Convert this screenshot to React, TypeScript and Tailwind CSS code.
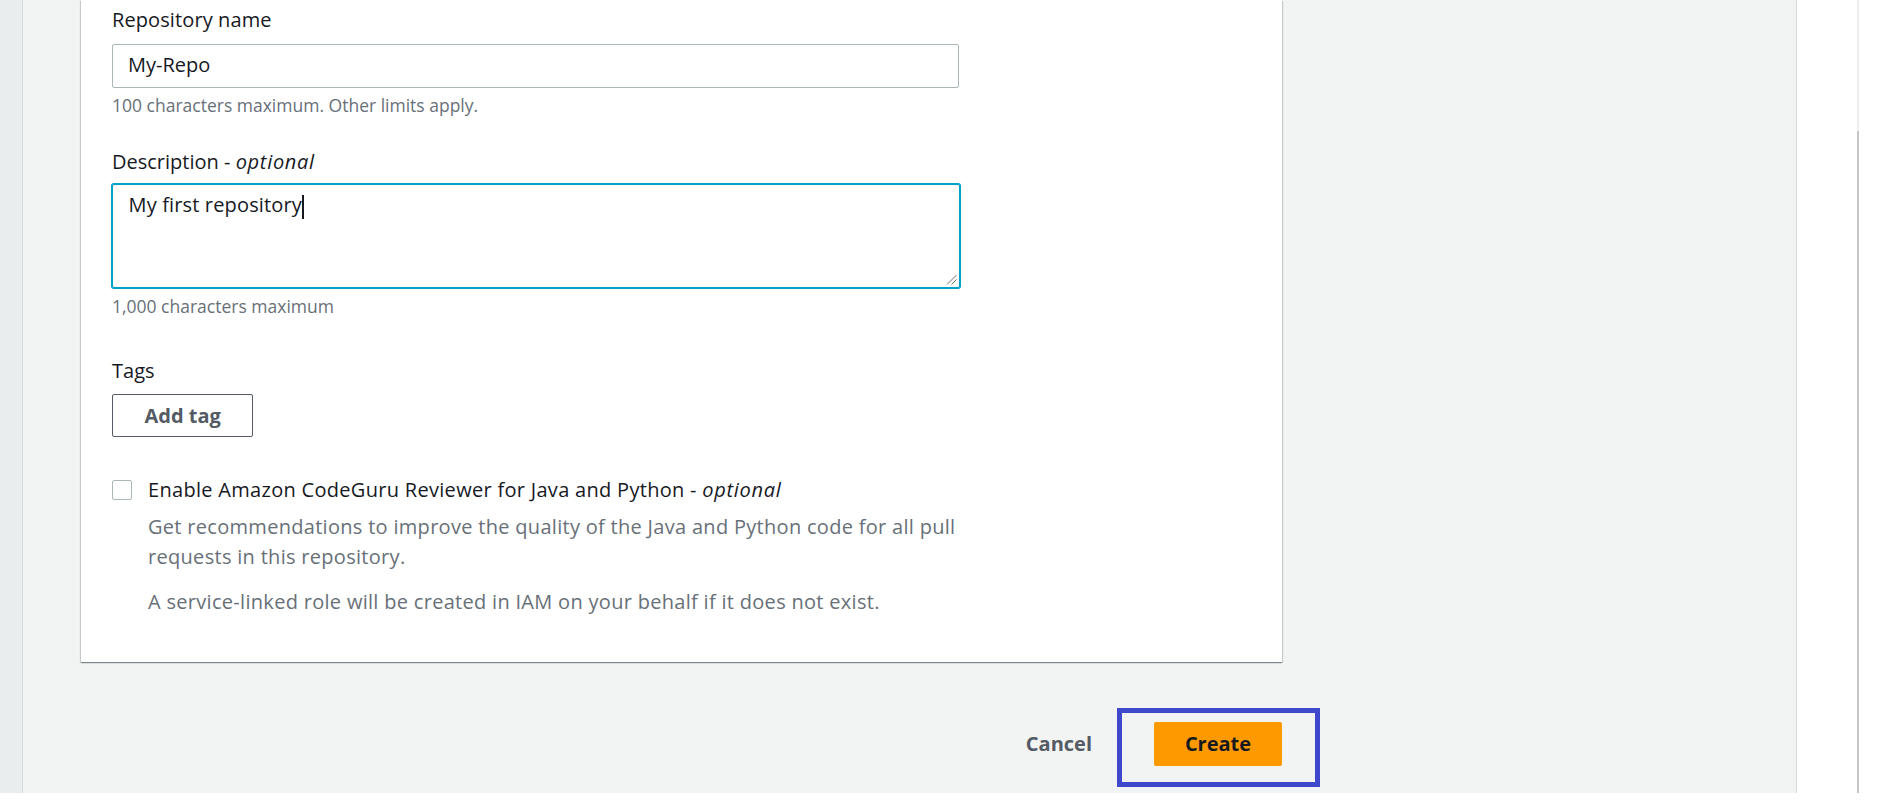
import React from "react";

export default function App() {
  return (
    <div className="relative flex h-[811px] w-[1898px] overflow-hidden bg-white font-['Open_Sans',sans-serif] text-[#16191f]">
      {/* left navigation strip */}
      <div className="h-[793px] w-[23px] shrink-0 border-r border-[#d5dbdb] bg-[#eaeded]" />

      {/* main content area */}
      <div className="h-[793px] w-[1774px] shrink-0 border-r border-[#d5dbdb] bg-[#f2f3f3] pl-[58px]">
        <div className="w-[1201px] bg-white pb-[45.5px] pl-[31px] pt-[5.5px] shadow-[0_1px_1px_0_rgba(0,28,36,0.3),1px_1px_1px_0_rgba(0,28,36,0.15),-1px_1px_1px_0_rgba(0,28,36,0.15)]">
          <div className="w-[847px]">
            <label className="block text-[20px] leading-[28px] tracking-[0.1px] text-[#16191f]">Repository name</label>
            <input
              readOnly
              value="My-Repo"
              className="mt-[10px] block h-[44px] w-full rounded-[2px] border border-[#aab7b8] bg-white pb-[3px] pl-[15px] text-[20px] text-[#16191f] outline-none"
            />
            <p className="mt-[5.5px] text-[17.5px] leading-[24px] text-[#687078]">
              100 characters maximum. Other limits apply.
            </p>

            <label className="mt-[31.3px] block text-[20px] leading-[28px] text-[#16191f]">
              Description - <i className="tracking-[0.7px]">optional</i>
            </label>
            <div className="relative -ml-[1px] mt-[7px] h-[106px] w-[850px] rounded-[3px] border-2 border-[#00a1c9] bg-white pl-[15.5px] pt-[6px] text-[20px] leading-[28px] tracking-[0.15px] text-[#16191f]">
              <span>My first repository</span>
              <span className="ml-[0.5px] mt-[3.8px] inline-block h-[24px] w-[2px] align-top bg-[#16191f]" />
              <svg
                className="absolute bottom-[2px] right-[2px]"
                width="11"
                height="11"
                viewBox="0 0 11 11"
              >
                <line x1="1" y1="10.5" x2="10.5" y2="1" stroke="#6f6f6f" strokeWidth="1" />
                <line x1="5.5" y1="10.5" x2="10.5" y2="5.5" stroke="#6f6f6f" strokeWidth="1" />
              </svg>
            </div>
            <p className="mt-[5px] text-[17.5px] leading-[24px] text-[#687078]">1,000 characters maximum</p>

            <label className="mt-[39px] block text-[20px] leading-[28px] text-[#16191f]">Tags</label>
            <button className="mt-[9px] block h-[43px] rounded-[2px] border border-[#545b64] bg-white px-[31.5px] text-[20px] font-bold text-[#545b64]">
              Add tag
            </button>

            <div className="mt-[38px] flex items-start">
              <div className="flex h-[30px] items-center">
                <div className="h-[20px] w-[20px] rounded-[2px] border border-[#aab7b8] bg-white" />
              </div>
              <div className="ml-[16px] w-[830px] tracking-[0.3px]">
                <div className="text-[20px] leading-[30px] text-[#16191f]">
                  Enable Amazon CodeGuru Reviewer for Java and Python - <i className="tracking-[0.7px]">optional</i>
                </div>
                <p className="mt-[6.7px] text-[20px] leading-[30px] text-[#687078]">
                  Get recommendations to improve the quality of the Java and Python code for all pull requests in
                  this repository.
                </p>
                <p className="mt-[15px] text-[20px] leading-[30px] text-[#687078]">
                  A service-linked role will be created in IAM on your behalf if it does not exist.
                </p>
              </div>
            </div>
          </div>
        </div>

        {/* actions */}
        <div className="mt-[60px] flex w-[1201px] items-center justify-end">
          <button className="mr-[62px] text-[20px] font-bold text-[#545b64]">Cancel</button>
          <div className="relative">
            <button className="h-[44px] w-[128px] rounded-[2px] bg-[#ff9900] text-[20px] font-bold text-[#16191f]">
              Create
            </button>
            <div className="pointer-events-none absolute -left-[37px] -top-[14px] h-[79px] w-[203px] border-[5px] border-[#3f48cc]" />
          </div>
        </div>
      </div>

      {/* right side with scrollbar */}
      <div className="relative h-[811px] flex-1">
        <div className="ml-[60px] flex h-[793px] w-[2px] flex-col">
          <div className="h-[131px] bg-[#eeeeee]" />
          <div className="flex-1 bg-[#c6c6c6]" />
        </div>
      </div>
    </div>
  );
}
